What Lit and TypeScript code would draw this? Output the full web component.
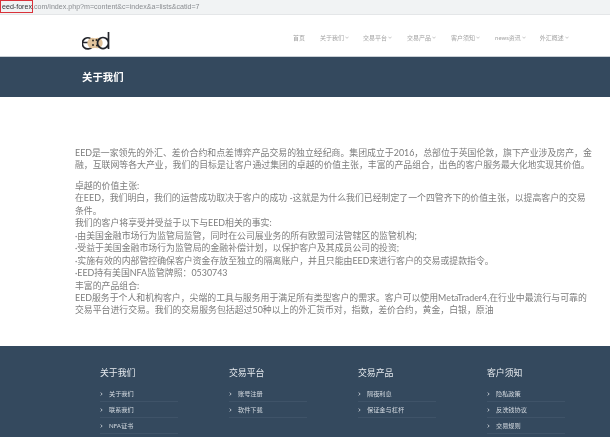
import { LitElement, html, css } from 'lit';
import { customElement } from 'lit/decorators.js';

const NAV = [
    { label: '首页', caret: false },
    { label: '关于我们', caret: true },
    { label: '交易平台', caret: true },
    { label: '交易产品', caret: true },
    { label: '客户须知', caret: true },
    { label: 'news资讯', caret: true },
    { label: '外汇概述', caret: true },
];

const FOOTER = [
    { title: '关于我们', links: ['关于我们', '联系我们', 'NFA证书'] },
    { title: '交易平台', links: ['账号注册', '软件下载'] },
    { title: '交易产品', links: ['隔夜利息', '保证金与杠杆'] },
    { title: '客户须知', links: ['隐私政策', '反洗钱协议', '交易规则'] },
];

const VALUE_LINES = [
    '卓越的价值主张:',
    '在EED，我们明白，我们的运营成功取决于客户的成功 -这就是为什么我们已经制定了一个四管齐下的价值主张，以提高客户的交易条件。',
    '我们的客户将享受并受益于以下与EED相关的事实:',
    '·由美国金融市场行为监管局监管，同时在公司展业务的所有欧盟司法管辖区的监管机构;',
    '·受益于美国金融市场行为监管局的金融补偿计划，以保护客户及其成员公司的投资;',
    '·实施有效的内部管控确保客户资金存放至独立的隔离账户，并且只能由EED来进行客户的交易或提款指令。',
    '·EED持有美国NFA监管牌照：0530743',
    '丰富的产品组合:',
    'EED服务于个人和机构客户，尖端的工具与服务用于满足所有类型客户的需求。客户可以使用MetaTrader4,在行业中最流行与可靠的交易平台进行交易。我们的交易服务包括超过50种以上的外汇货币对，指数，差价合约，黄金，白银，原油',
];

@customElement('app-root')
class AppRoot extends LitElement {
    static styles = css`
        :host {
            display: block;
            height: 437px;
            overflow: hidden;
            background: #fff;
            font-family: Lato, "Noto Sans CJK SC", sans-serif;
            filter: blur(0.35px);
        }

        /* 주소창 */
        .url-bar {
            position: relative;
            height: 14px;
            padding-left: 2px;
            background: #f1f3f4;
            border-bottom: 1px solid #e4e6e8;
            font: 7.1px/14px "Liberation Sans", sans-serif;
            color: #8a8d91;
            white-space: nowrap;
        }
        .url-bar b {
            font-weight: 400;
            color: #303236;
        }
        .marker {
            position: absolute;
            left: 0;
            top: 0;
            width: 31px;
            height: 11px;
            border: 1px solid #d9323a;
        }

        /* 헤더 */
        .header {
            display: flex;
            align-items: center;
            height: 42px;
            padding-left: 82px;
            border-bottom: 1px solid #c9d0d6;
            box-sizing: border-box;
        }
        .logo {
            display: block;
            margin-top: 11px;
        }
        .nav {
            display: flex;
            margin-left: 183px;
            margin-top: 3px;
            font-size: 6px;
            color: #a3a3a3;
        }
        .nav span {
            display: flex;
            align-items: center;
            gap: 1px;
            white-space: nowrap;
        }
        .nav svg {
            display: block;
        }

        /* 배너 */
        .banner {
            height: 40px;
            padding-left: 82px;
            background: #34495e;
            color: #fff;
            font-size: 10.4px;
            font-weight: 700;
            line-height: 41px;
        }

        /* 본문 */
        .content {
            height: 249px;
            box-sizing: border-box;
            padding: 50px 17px 0 75px;
            font-size: 8.9px;
            line-height: 12.45px;
            color: #7c7c7c;
        }
        .content p {
            margin: 0 0 8px;
        }

        /* 푸터 */
        .footer {
            display: grid;
            grid-template-columns: repeat(4, 78px);
            column-gap: 51px;
            height: 92px;
            padding: 21px 0 0 100px;
            box-sizing: border-box;
            background: #34495e;
            color: #e6eaee;
        }
        .footer h3 {
            margin: 0 0 7px;
            font-size: 8.9px;
            font-weight: 400;
            line-height: 12px;
        }
        .footer ul {
            margin: 0;
            padding: 0;
            list-style: none;
        }
        .footer li {
            display: flex;
            align-items: center;
            gap: 6px;
            height: 16px;
            box-sizing: border-box;
            font-size: 6.2px;
            color: #d5dbe1;
            border-bottom: 1px solid #3f5368;
        }
    `;

    renderCaret() {
        return html`<svg width="4" height="3" viewBox="0 0 4 3"><path d="M.4.7 2 2.3 3.6.7" fill="none" stroke="#a3a3a3" stroke-width=".6"/></svg>`;
    }

    render() {
        const gaps = [15, 14, 15, 15, 15, 14, 0];
        return html`
            <div class="url-bar"><b>eed-forex</b>.com/index.php?m=content&c=index&a=lists&catid=7<div class="marker"></div></div>
            <header class="header">
                <svg class="logo" width="28" height="18" viewBox="0 0 28 18">
                    <path d="M1 10.5h10M10.5 14.6A5.6 5.6 0 1 1 11 9" fill="none" stroke="#23252b" stroke-width="1.7"/>
                    <circle cx="10.5" cy="11" r="5.2" fill="#e2c49c"/>
                    <circle cx="15.5" cy="11" r="5.2" fill="#e2c49c"/>
                    <circle cx="11" cy="8.5" r="1" fill="#2a2722"/>
                    <circle cx="14.5" cy="8" r="1" fill="#2a2722"/>
                    <circle cx="11" cy="13" r="1" fill="#2a2722"/>
                    <circle cx="15" cy="13.5" r="1" fill="#2a2722"/>
                    <path d="M26.5 0v17M26.5 11a5.5 5.5 0 1 0 0 .1" fill="none" stroke="#23252b" stroke-width="1.7"/>
                </svg>
                <nav class="nav">
                    ${NAV.map((item, i) => html`
                        <span style="margin-right: ${gaps[i]}px">${item.label}${item.caret ? this.renderCaret() : ''}</span>
                    `)}
                </nav>
            </header>
            <div class="banner">关于我们</div>
            <main class="content">
                <p>EED是一家领先的外汇、差价合约和点差博弈产品交易的独立经纪商。集团成立于2016，总部位于英国伦敦，旗下产业涉及房产，金融，互联网等各大产业，我们的目标是让客户通过集团的卓越的价值主张，丰富的产品组合，出色的客户服务最大化地实现其价值。</p>
                ${VALUE_LINES.map(line => html`<div>${line}</div>`)}
            </main>
            <footer class="footer">
                ${FOOTER.map(col => html`
                    <section>
                        <h3>${col.title}</h3>
                        <ul>
                            ${col.links.map(link => html`
                                <li>
                                    <svg width="3" height="4" viewBox="0 0 3 4"><path d="M.6.6 2.2 2 .6 3.4" fill="none" stroke="#e6eaee" stroke-width=".7"/></svg>
                                    ${link}
                                </li>
                            `)}
                        </ul>
                    </section>
                `)}
            </footer>
        `;
    }
}

declare global {
    interface HTMLElementTagNameMap {
        'app-root': AppRoot;
    }
}
